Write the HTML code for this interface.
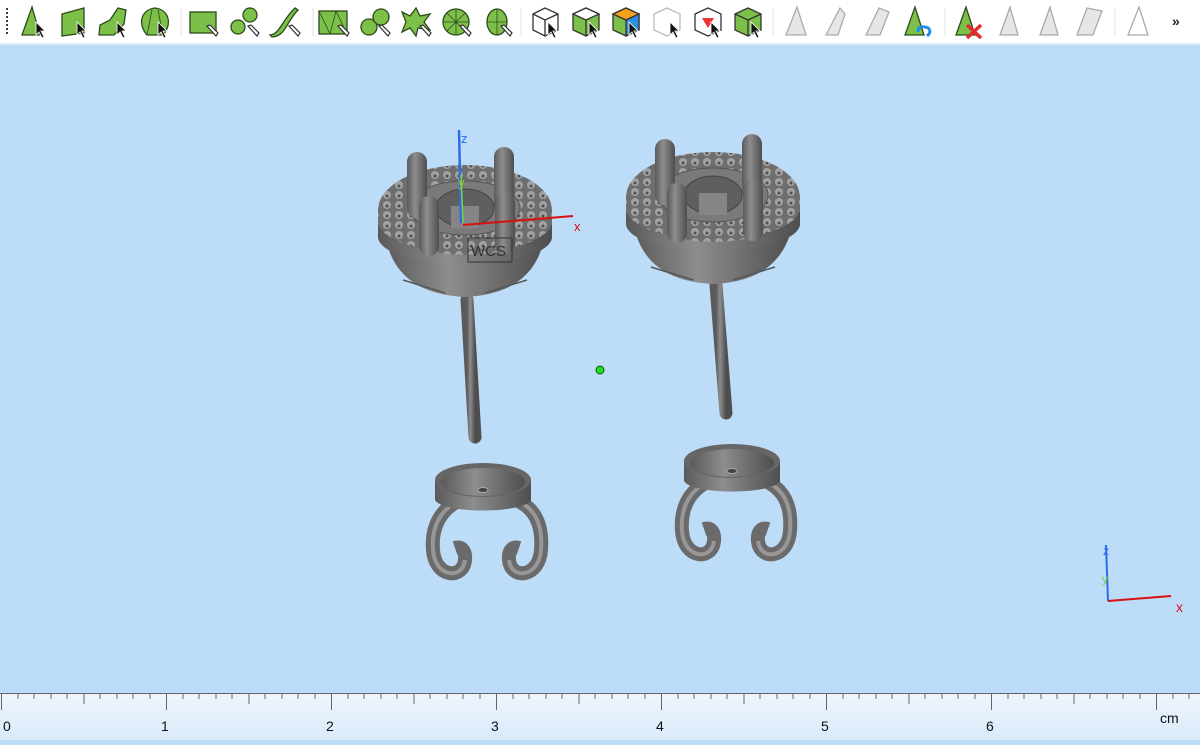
<!DOCTYPE html>
<html><head><meta charset="utf-8"><style>
html,body{margin:0;padding:0}
body{width:1200px;height:740px;overflow:hidden;background:#bddcf7;position:relative;font-family:"Liberation Sans",sans-serif}
#tb{position:absolute;left:0;top:0;width:1200px;height:43px;background:#fff;border-bottom:2px solid #d8ecfb}
#ruler{position:absolute;left:0;top:690px;width:1200px;height:50px;background:linear-gradient(#bddcf7 0,#bddcf7 3px,#eef5fd 4px,#d9eafa 100%)}
</style></head><body>
<div id="tb">
<svg width="1200" height="43" xmlns="http://www.w3.org/2000/svg">
<defs>
<g id="cur"><path d="M0 0 L0 13 L3 10 L6 16 L8 15 L5 9 L9 9 Z" fill="#111" stroke="#fff" stroke-width="0.8"/></g>
<g id="pen"><path d="M0 0 L3 -1 L11 7 L9 10 Z" fill="#fff" stroke="#333" stroke-width="1.2"/></g>
</defs>
<g fill="#3b3b3b"><rect x="6" y="8" width="2" height="2"/><rect x="6" y="12" width="2" height="2"/><rect x="6" y="16" width="2" height="2"/><rect x="6" y="20" width="2" height="2"/><rect x="6" y="24" width="2" height="2"/><rect x="6" y="28" width="2" height="2"/><rect x="6" y="32" width="2" height="2"/></g>
<g stroke="#e3e3e3" stroke-width="1"><line x1="181" y1="8" x2="181" y2="36"/><line x1="313" y1="8" x2="313" y2="36"/><line x1="521" y1="8" x2="521" y2="36"/><line x1="773" y1="8" x2="773" y2="36"/><line x1="945" y1="8" x2="945" y2="36"/><line x1="1115" y1="8" x2="1115" y2="36"/></g>
<g fill="#7cc04a" stroke="#2d4a1a" stroke-width="1.3">
<path d="M22 35 L32 7 L40 35 Z"/>
<path d="M62 14 L84 8 L84 33 L62 36 Z"/>
<path d="M99 35 L100 25 L110 20 L118 8 L126 10 L124 24 L114 35 Z"/>
<path d="M147 35 C138 25 140 10 155 8 C170 10 172 25 163 35 Z"/>
<rect x="190" y="12" width="26" height="21"/>
<circle cx="238" cy="27" r="7"/><circle cx="250" cy="15" r="7"/>
<path d="M270 35 C280 34 282 20 295 8 L298 10 C286 22 286 36 272 37 Z"/>
<rect x="319" y="11" width="28" height="23"/>
<circle cx="369" cy="27" r="8"/><circle cx="381" cy="17" r="8"/>
<path d="M402 12 L410 16 L416 8 L420 16 L430 14 L424 22 L430 30 L418 28 L416 36 L410 28 L402 32 L406 22 Z"/>
<circle cx="456" cy="22" r="13"/>
<ellipse cx="497" cy="22" rx="10" ry="13"/>
</g>
<g stroke="#2d4a1a" stroke-width="0.8" fill="none"><path d="M147 35 L152 10 M163 35 L158 10 M319 11 L330 34 L336 11 L347 34 M443 22 H469 M456 9 V35 M447 13 L465 31 M465 13 L447 31 M487 22 H507 M497 9 V35"/></g>
<g stroke="#333" stroke-width="1.3">
<path d="M533 14 L545 8 L558 14 L558 30 L545 36 L533 30 Z" fill="#fff"/><path d="M533 14 L545 20 L558 14 M545 20 V36" fill="none"/>
<path d="M573 14 L586 8 L599 14 L599 30 L586 36 L573 30 Z" fill="#7cc04a"/><path d="M573 14 L586 20 L599 14 L586 8 Z" fill="#fff"/><path d="M586 20 V36" fill="none"/>
<path d="M613 14 L626 8 L639 14 L639 30 L626 36 L613 30 Z" fill="#7cc04a"/><path d="M613 14 L626 20 L639 14 L626 8 Z" fill="#f5a21b"/><path d="M626 20 L639 14 L639 30 L626 36 Z" fill="#2a8fe0"/>
<path d="M654 14 L667 8 L680 14 L680 30 L667 36 L654 30 Z" fill="#fff" stroke="#bbb"/>
<path d="M695 14 L708 8 L721 14 L721 30 L708 36 L695 30 Z" fill="#fff"/><path d="M702 18 L714 18 L708 28 Z" fill="#e33" stroke="none"/>
<path d="M735 14 L748 8 L761 14 L761 30 L748 36 L735 30 Z" fill="#7cc04a"/><path d="M735 14 L748 20 L761 14 M748 20 V36" fill="none"/>
</g>
<g fill="#e6e6e6" stroke="#aaa" stroke-width="1.3">
<path d="M786 35 L797 7 L806 35 Z"/><path d="M826 35 L840 8 L845 14 L838 35 Z"/><path d="M866 35 L879 8 L889 12 L880 35 Z"/>
<path d="M1000 35 L1010 7 L1018 35 Z"/><path d="M1040 35 L1050 7 L1058 35 Z"/><path d="M1077 35 L1087 8 L1102 11 L1093 35 Z"/><path d="M1128 35 L1139 7 L1148 35 Z" fill="#fff"/>
</g>
<path d="M905 35 L915 7 L924 35 Z" fill="#7cc04a" stroke="#2d4a1a" stroke-width="1.3"/>
<path d="M924 27 C930 27 932 32 927 36 M918 32 C918 28 920 26 924 27" stroke="#1e8fe8" stroke-width="3" fill="none"/>
<path d="M956 35 L966 7 L975 35 Z" fill="#7cc04a" stroke="#2d4a1a" stroke-width="1.3"/>
<path d="M967 25 L981 38 M981 25 L967 38" stroke="#e52a2a" stroke-width="3.5"/>
<g>
<use href="#cur" x="36" y="22"/><use href="#cur" x="77" y="22"/><use href="#cur" x="117" y="22"/><use href="#cur" x="158" y="22"/>
<use href="#pen" x="207" y="26"/><use href="#pen" x="248" y="26"/><use href="#pen" x="289" y="26"/><use href="#pen" x="338" y="26"/><use href="#pen" x="379" y="26"/><use href="#pen" x="420" y="26"/><use href="#pen" x="460" y="26"/><use href="#pen" x="501" y="26"/>
<use href="#cur" x="548" y="22"/><use href="#cur" x="589" y="22"/><use href="#cur" x="629" y="22"/><use href="#cur" x="670" y="22"/><use href="#cur" x="711" y="22"/><use href="#cur" x="751" y="22"/>
</g>
<text x="1172" y="26" font-size="14" font-weight="bold" fill="#222">»</text>
</svg>
</div>

<svg style="position:absolute;left:0;top:45px" width="1200" height="645" xmlns="http://www.w3.org/2000/svg">
<defs>
<linearGradient id="g1" x1="0" x2="1"><stop offset="0" stop-color="#5a5a5a"/><stop offset="0.4" stop-color="#8d8d8d"/><stop offset="1" stop-color="#4e4e4e"/></linearGradient>
<pattern id="dots" width="12" height="10" patternUnits="userSpaceOnUse"><rect width="12" height="10" fill="#6e6e6e"/><circle cx="6" cy="5" r="4" fill="#a2a2a2"/><circle cx="6" cy="6" r="1.5" fill="#505050"/></pattern>
<g id="head">
<path d="M-80 25 C-72 70 -40 85 0 87 C40 85 72 70 80 25 Z" fill="url(#g1)"/>
<path d="M-62 70 L-20 83 M62 70 L20 83" stroke="#555" stroke-width="1.5"/>
<path d="M-87 0 L-87 28 C-80 62 80 62 87 28 L87 0 Z" fill="url(#g1)"/>
<ellipse cx="0" cy="0" rx="87" ry="45" fill="url(#dots)"/>
<path d="M-87 12 C-80 52 80 52 87 12 L87 0 C80 40 -80 40 -87 0 Z" fill="url(#dots)"/>
<ellipse cx="0" cy="-2" rx="55" ry="27" fill="#7a7a7a" stroke="#555"/>
<ellipse cx="0" cy="-2" rx="29" ry="19" fill="#5f5f5f" stroke="#444"/>
<rect x="-14" y="-4" width="28" height="22" fill="#858585"/>
<rect x="-58" y="-58" width="20" height="66" rx="10" fill="url(#g1)"/>
<rect x="29" y="-63" width="20" height="66" rx="10" fill="url(#g1)"/>
<rect x="-46" y="-14" width="20" height="60" rx="10" fill="url(#g1)"/>
<rect x="30" y="-18" width="20" height="62" rx="10" fill="url(#g1)"/>
</g>
<g id="back">
<path d="M-18 18 C-40 26 -52 44 -50 70 C-48 98 -20 100 -18 80 C-17 70 -22 66 -28 68 M28 18 C52 26 60 44 58 70 C56 98 28 100 26 80 C25 70 30 66 36 68" stroke="#6a6a6a" stroke-width="14" fill="none"/>
<path d="M-18 18 C-40 26 -52 44 -50 70 C-48 98 -20 100 -18 80 M28 18 C52 26 60 44 58 70 C56 98 28 100 26 80" stroke="#979797" stroke-width="4" fill="none"/>
<path d="M-48 0 L-48 20 C-40 34 40 34 48 20 L48 0 Z" fill="url(#g1)"/>
<ellipse cx="0" cy="0" rx="48" ry="17" fill="#666"/>
<ellipse cx="0" cy="2" rx="42" ry="14" fill="url(#g1)"/>
<ellipse cx="0" cy="10" rx="5" ry="2.5" fill="#444" stroke="#aaa"/>
</g>
</defs>
<path d="M467 255 L475 392" stroke="url(#g1)" stroke-width="13" stroke-linecap="round"/>
<use href="#head" x="465" y="165"/>
<use href="#back" x="483" y="435"/>
<path d="M716 240 L726 368" stroke="url(#g1)" stroke-width="13" stroke-linecap="round"/>
<use href="#head" x="713" y="152"/>
<use href="#back" x="732" y="416"/>
<line x1="461" y1="178" x2="459" y2="85" stroke="#2a6de8" stroke-width="2.5"/>
<line x1="463" y1="180" x2="573" y2="171" stroke="#d81010" stroke-width="2"/>
<line x1="463" y1="178" x2="461" y2="130" stroke="#7ed43a" stroke-width="1.5"/>
<text x="461" y="98" font-size="13" fill="#2a6de8">z</text>
<text x="458" y="142" font-size="13" fill="#7ed43a">y</text>
<text x="574" y="186" font-size="13" fill="#d81010">x</text>
<rect x="468" y="193" width="44" height="24" fill="none" stroke="#333"/>
<text x="471" y="211" font-size="15" fill="#333">WCS</text>
<circle cx="600" cy="325" r="4" fill="#22dd22" stroke="#0a5a0a" stroke-width="1"/>
<line x1="1108" y1="556" x2="1106" y2="500" stroke="#2a6de8" stroke-width="2"/>
<line x1="1108" y1="556" x2="1171" y2="551" stroke="#d81010" stroke-width="2"/>
<text x="1103" y="510" font-size="12" fill="#2a6de8">z</text>
<text x="1102" y="538" font-size="12" fill="#7ed43a">y</text>
<text x="1176" y="567" font-size="14" fill="#d81010">x</text>
</svg>

<div id="ruler">
<svg width="1200" height="50" xmlns="http://www.w3.org/2000/svg">
<line x1="0" y1="3.5" x2="1200" y2="3.5" stroke="#666" stroke-width="1"/>
<g stroke="#666" stroke-width="1">
<path d="M1.5 3V20 M18 3V9 M34 3V9 M51 3V9 M67 3V9 M84 3V14 M100 3V9 M117 3V9 M133 3V9 M150 3V9 M166.5 3V20 M183 3V9 M199 3V9 M216 3V9 M232 3V9 M249 3V14 M265 3V9 M282 3V9 M298 3V9 M315 3V9 M331.5 3V20 M348 3V9 M364 3V9 M381 3V9 M397 3V9 M414 3V14 M430 3V9 M447 3V9 M463 3V9 M480 3V9 M496.5 3V20 M513 3V9 M529 3V9 M546 3V9 M562 3V9 M579 3V14 M595 3V9 M612 3V9 M628 3V9 M645 3V9 M661.5 3V20 M678 3V9 M694 3V9 M711 3V9 M727 3V9 M744 3V14 M760 3V9 M777 3V9 M793 3V9 M810 3V9 M826.5 3V20 M843 3V9 M859 3V9 M876 3V9 M892 3V9 M909 3V14 M925 3V9 M942 3V9 M958 3V9 M975 3V9 M991.5 3V20 M1008 3V9 M1024 3V9 M1041 3V9 M1057 3V9 M1074 3V14 M1090 3V9 M1107 3V9 M1123 3V9 M1140 3V9 M1156.5 3V20 M1173 3V9 M1189 3V9"/>
</g>
<g font-size="14" fill="#111">
<text x="3" y="41">0</text><text x="161" y="41">1</text><text x="326" y="41">2</text><text x="491" y="41">3</text><text x="656" y="41">4</text><text x="821" y="41">5</text><text x="986" y="41">6</text><text x="1160" y="33">cm</text>
</g>
</svg>
</div>
</body></html>
